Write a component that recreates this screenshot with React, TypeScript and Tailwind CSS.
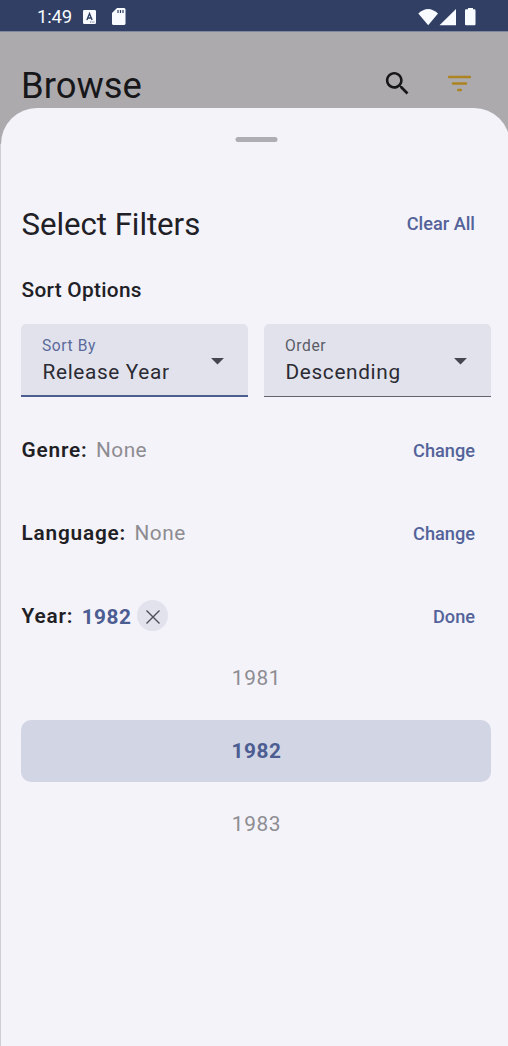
import type { ReactNode } from "react";

function StatusBar() {
  return (
    <div className="flex h-[31px] shrink-0 items-center bg-[#303f63] pl-[37px] pr-[32px] pt-[2px] text-[#f8fbff]">
      <span className="w-[46px] pt-px text-[18.5px] leading-[28px] tracking-[-0.2px]">1:49</span>
      <svg width="13" height="14" viewBox="0 0 13 14" className="block">
        <rect width="13" height="14" rx="1.2" fill="currentColor" />
        <path d="M3.9 10 6.5 3.6 9.1 10M4.8 8h3.4" fill="none" stroke="#303f63" strokeWidth="1.4" />
        <path d="M7 12h4.5" stroke="#303f63" strokeWidth=".8" strokeDasharray="1 .7" />
      </svg>
      <svg width="14" height="17" viewBox="0 0 14 17" className="ml-[15.5px] block">
        <path d="M5 0h7.100Q13.500 0 13.500 1.600v13.800q0 1.600-1.600 1.600H1.600Q0 17 0 15.400V5z" fill="currentColor" />
        <path d="M6 2v3M8.500 2v3M11 2v3" stroke="#303f63" strokeWidth="1.2" />
      </svg>
      <svg width="58" height="18" viewBox="0 0 58 18" className="ml-auto block" fill="currentColor">
        <path d="M.3 5.500Q10-3.500 20 5.500L10.200 17.300z" />
        <path d="M21.500 17.300H38V1z" />
        <path d="M50 0h5v1.300h1.400q1.100 0 1.100 1.100v13.800q0 1.100-1.100 1.100h-8.300q-1.100 0-1.100-1.100V2.400q0-1.100 1.100-1.100H50z" />
      </svg>
    </div>
  );
}

function TopBar() {
  return (
    <div className="flex h-[104px] shrink-0 items-center border-t border-[#7f889f] pl-[21px] pr-[33px]">
      <h1 className="pt-[4px] text-[36.4px] leading-[46px] text-[#171619]">Browse</h1>
      <svg width="31" height="31" viewBox="0 0 24 24" className="ml-auto block" fill="#171619">
        <path d="M15.500 14h-.79l-.28-.27C15.410 12.590 16 11.110 16 9.500 16 5.910 13.090 3 9.500 3S3 5.910 3 9.500 5.910 16 9.500 16c1.610 0 3.090-.59 4.230-1.570l.27.28v.79l5 4.990L20.490 19l-4.990-5zm-6 0C7.010 14 5 11.990 5 9.500S7.010 5 9.500 5 14 7.010 14 9.500 11.990 14 9.500 14z" />
      </svg>
      <svg width="31" height="31" viewBox="0 0 24 24" className="ml-[31.5px] block" fill="none" stroke="#ad8422" strokeWidth="2" strokeLinecap="round">
        <path d="M4 7h16M7 12h10M11 17h2" />
      </svg>
    </div>
  );
}

function SelectField({ label, value, active = false }: { label: string; value: string; active?: boolean }) {
  return (
    <div className="relative flex h-[73px] flex-1 items-center rounded-t-[5px] bg-[#e1e2ec] pl-[21px] pr-[15px]">
      <div className="h-[50px] flex-1">
        <div
          className={
            active
              ? "text-[15.6px] leading-[21px] tracking-[0.6px] text-[#5a6a9b]"
              : "text-[15.6px] leading-[21px] tracking-[0.6px] text-[#5b5c66]"
          }
        >
          {label}
        </div>
        <div className="pl-[0.5px] text-[20.8px] leading-[31px] tracking-[0.65px] text-[#2b2b33]">{value}</div>
      </div>
      <svg width="31" height="31" viewBox="0 0 24 24" className="block" fill="#45464f">
        <path d="m7 10 5 5 5-5z" />
      </svg>
      <div
        className={
          active ? "absolute inset-x-0 bottom-0 h-[2.5px] bg-[#4c5d92]" : "absolute inset-x-0 bottom-0 h-px bg-[#63646d]"
        }
      />
    </div>
  );
}

function FilterRow({ label, action, children }: { label: string; action: string; children: ReactNode }) {
  return (
    <div className="flex h-[83px] items-center pr-[16px]">
      <span className="pl-[0.5px] text-[20.8px] font-semibold leading-[31px] tracking-[0.8px] text-[#1f1f25]">{label}</span>
      {children}
      <button className="ml-auto text-[18.2px] font-medium leading-[25px] text-[#53639a]">{action}</button>
    </div>
  );
}

function None() {
  return <span className="ml-[8.5px] text-[20.8px] leading-[31px] tracking-[0.5px] text-[#8d8c91]">None</span>;
}

function Sheet() {
  return (
    <div className="-mt-[27px] flex flex-1">
      <div className="mt-[36px] w-px bg-[#cfcfd5]" />
      <div className="-mr-[2px] flex flex-1 flex-col rounded-t-[36px] bg-[#f4f3f9] pl-[20px] pr-[19px]">
        <div className="mx-auto mt-[29px] h-[5px] w-[42px] translate-x-[0.5px] rounded-full bg-[#aeadb2]" />
        <div className="mt-[61px] flex h-[42px] items-center justify-between pr-[16px]">
          <h2 className="pl-[0.5px] pt-[1px] text-[31.2px] leading-[42px] tracking-[-0.04px] text-[#202026]">Select Filters</h2>
          <button className="text-[18.2px] font-medium leading-[26px] text-[#53639a]">Clear All</button>
        </div>
        <h3 className="mt-[30px] pl-[0.5px] text-[20.8px] font-medium leading-[31px] tracking-[0.3px] text-[#202026]">Sort Options</h3>
        <div className="mt-[18px] flex gap-[16px]">
          <SelectField label="Sort By" value="Release Year" active />
          <SelectField label="Order" value="Descending" />
        </div>
        <div className="mt-[12px]">
          <FilterRow label="Genre:" action="Change">
            <None />
          </FilterRow>
          <FilterRow label="Language:" action="Change">
            <None />
          </FilterRow>
          <FilterRow label="Year:" action="Done">
            <span className="ml-[8.5px] mt-[2px] text-[20.8px] font-bold leading-[31px] tracking-[0.55px] text-[#4c5d92]">1982</span>
            <button className="-mt-[2px] ml-[5.5px] flex size-[31px] items-center justify-center rounded-full bg-[#e1e2ec]" aria-label="Clear year">
              <svg width="14" height="14" viewBox="0 0 14 14" className="mt-[2px]" stroke="#4c4d57" strokeWidth="1.4">
                <path d="m.5 .5 13 13M13.500 .5l-13 13" />
              </svg>
            </button>
          </FilterRow>
        </div>
        <div className="-mt-[11px] flex flex-col gap-[11px] text-center text-[20.8px] tracking-[0.65px] text-[#8d8c91]">
          <div className="pl-px leading-[62px]">1981</div>
          <div className="rounded-[10px] bg-[#d2d5e4] pl-px font-bold leading-[62px] tracking-[0.55px] text-[#4c5d92]">1982</div>
          <div className="pl-px leading-[62px]">1983</div>
        </div>
      </div>
    </div>
  );
}

export default function App() {
  return (
    <div className="flex h-[1046px] w-[508px] flex-col overflow-hidden bg-[#acaaad] font-['Roboto',sans-serif]">
      <StatusBar />
      <TopBar />
      <Sheet />
    </div>
  );
}
